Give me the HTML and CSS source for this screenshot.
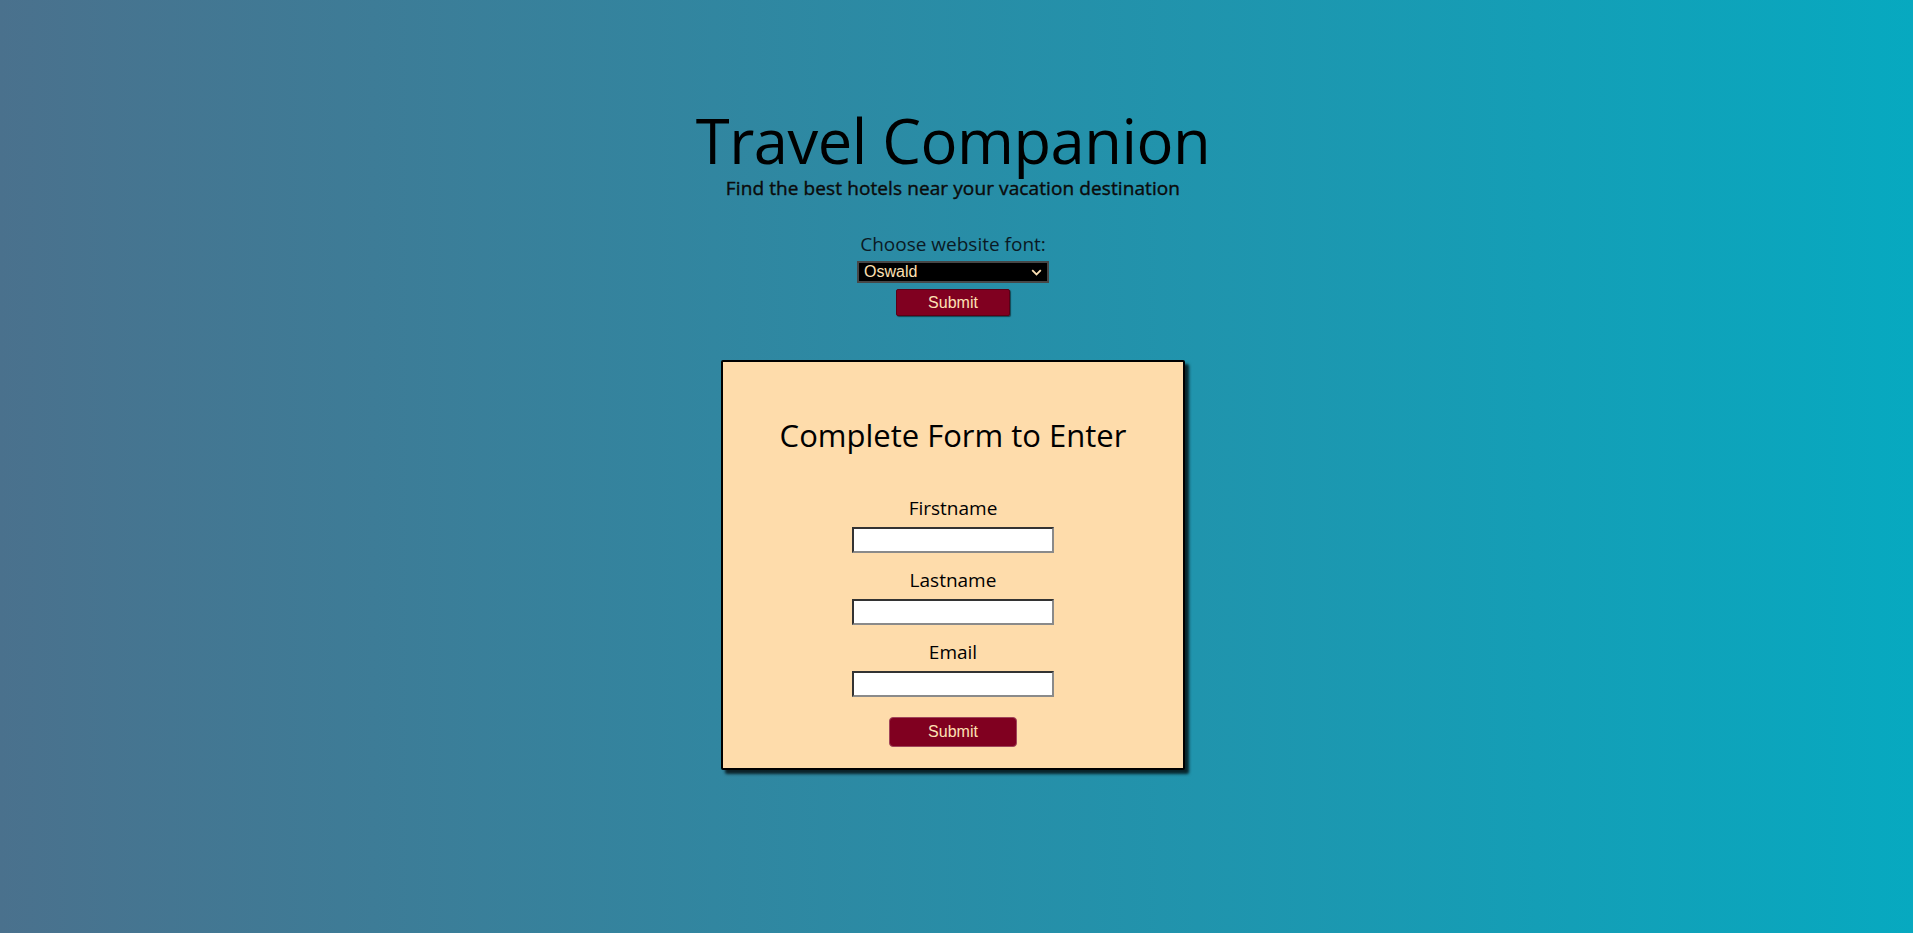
FILE: index.html
```html
<!DOCTYPE html>
<html lang="en">
<head>
<meta charset="utf-8">
<title>Travel Companion</title>
<link rel="stylesheet" href="styles.css">
</head>
<body>
<div class="page">
  <header class="hero">
    <h1 class="title">Travel Companion</h1>
    <p class="subtitle">Find the best hotels near your vacation destination</p>
  </header>
  <form class="font-form">
    <label class="font-label" for="font">Choose website font:</label>
    <div class="select-wrap">
      <select id="font" class="font-select">
        <option>Oswald</option>
        <option>Oxygen</option>
        <option>Roboto</option>
      </select>
      <svg class="chev" width="11" height="7" viewBox="0 0 11 7"><path d="M1.2 1.2 L5.5 5.5 L9.8 1.2" fill="none" stroke="#fde0b4" stroke-width="1.8"/></svg>
    </div>
    <button type="button" class="btn btn-small">Submit</button>
  </form>
  <section class="card">
    <h2 class="card-title">Complete Form to Enter</h2>
    <div class="field">
      <label class="field-label" for="fn">Firstname</label>
      <input id="fn" class="field-input" type="text">
    </div>
    <div class="field">
      <label class="field-label" for="ln">Lastname</label>
      <input id="ln" class="field-input" type="text">
    </div>
    <div class="field">
      <label class="field-label" for="em">Email</label>
      <input id="em" class="field-input" type="text">
    </div>
    <button type="button" class="btn btn-large">Submit</button>
  </section>
</div>
</body>
</html>
```

FILE: styles.css
```css
* { box-sizing: border-box; }
html, body { margin: 0; padding: 0; }
body {
  min-height: 100vh;
  background: linear-gradient(to right, #4a718d, #07a9c0);
  font-family: "Open Sans", "Noto Sans", sans-serif;
  color: #000;
}
.page {
  display: flex;
  flex-direction: column;
  align-items: center;
  padding-top: 105px;
  padding-right: 7px;
}
.hero { display: flex; flex-direction: column; align-items: center; }
.title {
  margin: 0;
  font-size: 61.5px;
  font-weight: 400;
  line-height: 70px;
  letter-spacing: -0.5px;
}
.subtitle {
  margin: 1px 0 0;
  font-size: 19px;
  font-weight: 400;
  line-height: 24px;
  letter-spacing: 0.1px;
  color: #0b0b0b;
  -webkit-text-stroke: 0.4px #0b0b0b;
}
.font-form {
  display: flex;
  flex-direction: column;
  align-items: center;
  margin-top: 32px;
}
.font-label {
  font-size: 19px;
  line-height: 24px;
  color: #0a1a24;
}
.select-wrap { position: relative; margin-top: 5px; }
.font-select {
  appearance: none;
  -webkit-appearance: none;
  display: block;
  width: 192px;
  height: 22px;
  background: #000;
  color: #fde0b4;
  border: 2px solid #474747;
  font-family: "Liberation Sans", Arial, sans-serif;
  font-size: 16px;
  padding: 0 0 0 5px;
  line-height: 18px;
  border-radius: 0;
}
.chev { position: absolute; right: 7px; top: 8px; pointer-events: none; }
.btn {
  background: #800020;
  color: #fde0b4;
  font-family: "Liberation Sans", Arial, sans-serif;
  font-size: 16px;
  cursor: pointer;
  padding: 0;
}
.btn-small {
  margin-top: 6px;
  width: 114px;
  height: 27px;
  border: 1px solid #5a0016;
  border-radius: 2px;
  box-shadow: 1px 1px 1px rgba(0,0,0,0.5);
}
.card {
  margin-top: 44px;
  width: 464px;
  background: #fedcab;
  border: 2px solid #000;
  box-shadow: 4px 4px 3px rgba(0,0,0,0.75);
  display: flex;
  flex-direction: column;
  align-items: center;
  padding: 53px 0 21px;
  border-radius: 2px;
}
.card-title {
  margin: 0 0 40px;
  font-size: 31px;
  font-weight: 500;
  line-height: 40px;
}
.field {
  display: flex;
  flex-direction: column;
  align-items: center;
  margin-bottom: 14px;
}
.field-label {
  font-size: 19px;
  line-height: 26px;
  margin-bottom: 6px;
}
.field-input {
  width: 202px;
  height: 26px;
  background: #fff;
  border-style: solid;
  border-width: 2px;
  border-color: #333 #8a8a8a #8a8a8a #333;
  padding: 1px 3px;
  font-size: 15px;
}
.btn-large {
  margin-top: 6px;
  width: 128px;
  height: 30px;
  border: 1px solid #a0455a;
  border-radius: 4px;
}
```
